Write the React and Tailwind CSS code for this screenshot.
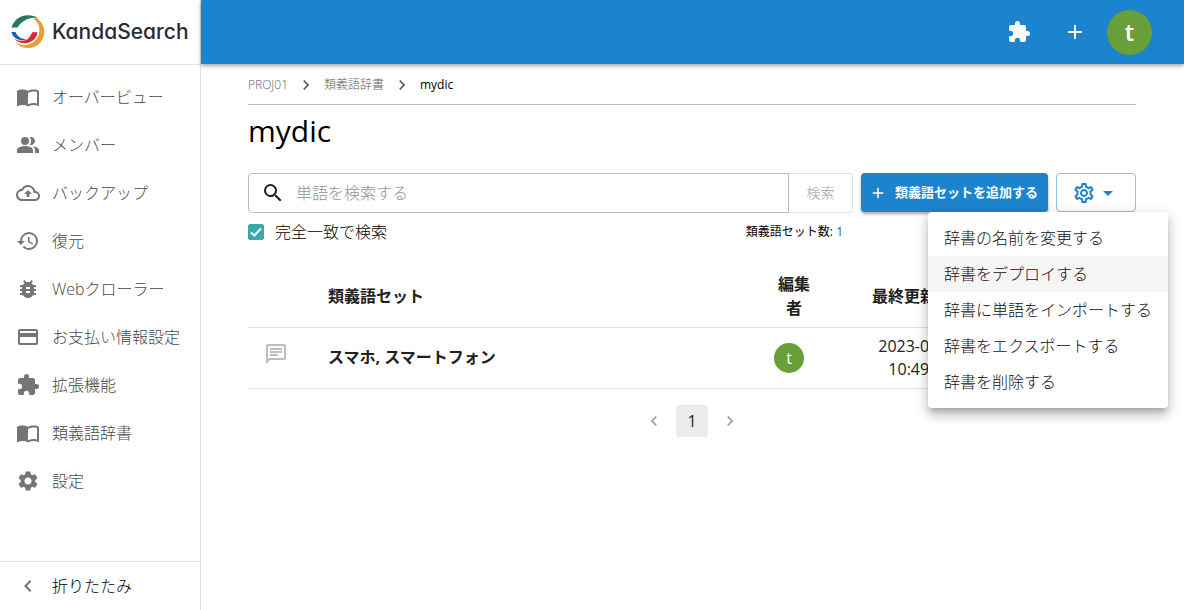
import React, { useState } from 'react';
import clsx from 'clsx';
import {
  MdAdd,
  MdArrowDropDown,
  MdBugReport,
  MdChevronLeft,
  MdChevronRight,
  MdExtension,
  MdHistory,
  MdImportContacts,
  MdOutlineBackup,
  MdOutlineChat,
  MdOutlineSettings,
  MdPayment,
  MdPeopleAlt,
  MdSearch,
  MdSettings
} from 'react-icons/md';

const menuItems = [
  { name: 'オーバービュー', path: '#overview', icon: MdImportContacts },
  { name: 'メンバー', path: '#members', icon: MdPeopleAlt },
  { name: 'バックアップ', path: '#backup', icon: MdOutlineBackup },
  { name: '復元', path: '#restore', icon: MdHistory },
  { name: 'Webクローラー', path: '#crawler', icon: MdBugReport },
  { name: 'お支払い情報設定', path: '#payment', icon: MdPayment },
  { name: '拡張機能', path: '#extensions', icon: MdExtension },
  { name: '類義語辞書', path: '#dictionaries', icon: MdImportContacts },
  { name: '設定', path: '#settings', icon: MdSettings }
];

const dictionaryActions = [
  '辞書の名前を変更する',
  '辞書をデプロイする',
  '辞書に単語をインポートする',
  '辞書をエクスポートする',
  '辞書を削除する'
];

const synonymSets = [
  { id: 1, words: 'スマホ, スマートフォン', editor: 't', date: '2023-02-01', time: '10:49:30' }
];

const Logo = () => (
  <a href="#home" className="flex h-16 items-center gap-[7px] pl-[11px]">
    <svg width="34" height="34" viewBox="0 0 34 34" aria-hidden="true">
      <path d="M0.5 12.5C3 5 9 0.3 17 0.3c4 0 7.5 1.2 10 3.2C24.500 2.600 22 2.600 19.500 3.200 13 4.500 9 8.500 6.500 12.500Z" fill="#2a7458" />
      <path d="M26.500 3.500C31 7 33.400 12 33.200 17.500 32.800 26.500 26 33 17 33c-5 0-9.500-2-12.500-6C8 29.600 12 30.600 16 29.800 23 28.500 28 23 28.400 16 28.600 11 27 7 22.500 4.200 24 3.400 25.300 3.200 26.500 3.500Z" fill="#e79f33" />
      <path d="M0.500 17H4.500C6 21.500 10.500 24.500 15.500 24c-2.500 1.600-8 1.800-11.500-1.300C2 21 0.700 19 0.500 17Z" fill="#0f60ae" />
      <path d="M26.500 17.300C26 23.500 20.500 28.200 14 28.200 9.500 28.200 5.500 26.500 3 23.500c4 2.800 9 3 12.500 1.200 2.500-1.300 4.500-4 5.500-7.400Z" fill="#d5282f" />
    </svg>
    <span className="font-['Inter',sans-serif] text-[21px] leading-8 font-medium text-[#2b2b37] [font-feature-settings:'cv11']">
      KandaSearch
    </span>
  </a>
);

const Sidebar = () => (
  <aside className="flex w-[201px] shrink-0 flex-col border-r border-[#e0e0e0] bg-white">
    <Logo />
    <nav className="flex-1 border-t border-[#e0e0e0] pt-2">
      {menuItems.map((item) => {
        const Icon = item.icon;
        return (
          <a
            key={item.path}
            href={item.path}
            className="flex h-12 items-center gap-3 pl-4 text-base text-[#484848]"
          >
            <Icon size={24} className="text-[#757575]" />
            {item.name}
          </a>
        );
      })}
    </nav>
    <button
      type="button"
      className="flex h-[49px] items-center gap-3 border-t border-[#e0e0e0] pl-4 text-base text-black"
    >
      <MdChevronLeft size={24} className="text-[#757575]" />
      折りたたみ
    </button>
  </aside>
);

const Header = () => (
  <header className="z-10 flex h-16 shrink-0 items-center justify-end bg-[#1c84ce] pr-8 text-white shadow-[0_2px_4px_rgba(0,0,0,0.35)]">
    <button type="button" aria-label="拡張機能" className="mr-8">
      <MdExtension size={24} />
    </button>
    <button type="button" aria-label="追加" className="mr-5">
      <MdAdd size={24} />
    </button>
    <button
      type="button"
      className="size-[45px] rounded-full bg-[#689f38] text-2xl font-semibold"
    >
      t
    </button>
  </header>
);

const Breadcrumb = () => (
  <nav className="flex h-[41px] items-center gap-2 border-b border-[#bdbdbd] pt-[2px] text-xs text-[#616161]">
    <a href="#proj">PROJ01</a>
    <MdChevronRight size={20} />
    <a href="#dictionaries">類義語辞書</a>
    <MdChevronRight size={20} />
    <span className="font-normal text-black">mydic</span>
  </nav>
);

const ActionMenu = () => {
  const [open, setOpen] = useState(true);
  const [active, setActive] = useState(1);

  return (
    <div className="relative ml-2">
      <button
        type="button"
        aria-label="辞書の操作"
        onClick={() => setOpen(!open)}
        className="flex h-[39px] w-20 items-center justify-center rounded border border-[#8dc1e6] text-[#1c84ce]"
      >
        <MdOutlineSettings size={24} />
        <MdArrowDropDown size={24} />
      </button>
      {open && (
        <ul className="absolute top-full -right-8 z-20 w-60 rounded bg-white py-2 shadow-[0_5px_5px_-3px_rgba(0,0,0,0.2),0_8px_10px_1px_rgba(0,0,0,0.14),0_3px_14px_2px_rgba(0,0,0,0.12)]">
          {dictionaryActions.map((label, i) => (
            <li key={label}>
              <button
                type="button"
                onMouseEnter={() => setActive(i)}
                className={clsx(
                  'h-9 w-full px-4 text-left text-base text-[#111111]',
                  active === i && 'bg-[#f5f5f5]'
                )}
              >
                {label}
              </button>
            </li>
          ))}
        </ul>
      )}
    </div>
  );
};

const Toolbar = () => (
  <div className="mt-[22px] flex items-start">
    <div className="flex h-10 flex-1 items-center rounded-l border border-[#bdbdbd] pl-3">
      <MdSearch size={24} className="text-[#212121]" />
      <input
        type="text"
        aria-label="単語を検索する"
        placeholder="単語を検索する"
        className="ml-[11px] min-w-0 flex-1 text-base outline-none placeholder:text-[#949494]"
      />
    </div>
    <button
      type="button"
      disabled
      className="h-10 w-16 rounded-r border border-l-0 border-[#e0e0e0] text-sm text-[#9e9e9e]"
    >
      検索
    </button>
    <button
      type="button"
      className="ml-2 flex h-[39px] items-center gap-2 rounded bg-[#1c84ce] pr-[10px] pl-2 text-[13px] font-bold text-white shadow-[0_2px_3px_rgba(0,0,0,0.35)]"
    >
      <MdAdd size={18} />
      類義語セットを追加する
    </button>
    <ActionMenu />
  </div>
);

const SynonymTable = () => (
  <table className="mt-[21px] w-full table-fixed text-base text-[#212121]">
    <colgroup>
      <col className="w-16" />
      <col />
      <col className="w-[72px]" />
      <col className="w-[180px]" />
      <col className="w-[126px]" />
    </colgroup>
    <thead>
      <tr className="h-[62px] border-b border-[#e0e0e0] font-bold">
        <td />
        <th className="px-4 text-left">類義語セット</th>
        <th className="px-4 text-center">編集者</th>
        <th className="px-4 text-center">最終更新日時</th>
        <td />
      </tr>
    </thead>
    <tbody>
      {synonymSets.map((set) => (
        <tr key={set.id} className="h-[61px] border-b border-[#e0e0e0]">
          <td className="pb-2 pl-4">
            <MdOutlineChat size={24} className="text-[#bdbdbd]" />
          </td>
          <td className="px-4 pb-[2px] font-bold">{set.words}</td>
          <td className="pl-4">
            <div className="flex size-[30px] items-center justify-center rounded-full bg-[#689f38] font-normal text-white">
              {set.editor}
            </div>
          </td>
          <td className="text-center leading-[23px] font-normal">
            <div>{set.date}</div>
            <div>{set.time}</div>
          </td>
          <td />
        </tr>
      ))}
    </tbody>
  </table>
);

const Pagination = () => (
  <div className="mt-4 flex items-center justify-center gap-3 text-[#9e9e9e]">
    <button type="button" aria-label="前へ">
      <MdChevronLeft size={20} />
    </button>
    <button type="button" className="size-8 rounded bg-[#ebebeb] text-base font-normal text-[#212121]">
      1
    </button>
    <button type="button" aria-label="次へ">
      <MdChevronRight size={20} />
    </button>
  </div>
);

const App = () => {
  const [exact, setExact] = useState(true);

  return (
    <div className="flex min-h-screen bg-white font-['Open_Sans','Noto_Sans_CJK_JP',sans-serif] font-light">
      <Sidebar />
      <div className="flex min-w-0 flex-1 flex-col">
        <Header />
        <main className="flex-1 pr-12 pl-[47px]">
          <Breadcrumb />
          <h1 className="mt-[6px] text-[30px] leading-10 font-normal text-black">mydic</h1>
          <Toolbar />
          <div className="mt-[7px] flex h-6 items-center">
            <label className="flex items-center gap-[11px] text-base text-black">
              <span className="relative flex size-4">
                <input
                  type="checkbox"
                  checked={exact}
                  onChange={(e) => setExact(e.target.checked)}
                  className="peer size-4 appearance-none rounded-xs border border-[#3aa9ab] checked:bg-[#3aa9ab]"
                />
                <svg
                  viewBox="0 0 16 16"
                  className="pointer-events-none absolute inset-0 hidden fill-none stroke-white stroke-2 peer-checked:block"
                >
                  <path d="M3 8.500 6.300 11.500 13 4.500" />
                </svg>
              </span>
              完全一致で検索
            </label>
            <p className="mr-[293px] ml-auto text-xs font-normal text-black">
              類義語セット数: <span className="text-[#14608f]">1</span>
            </p>
          </div>
          <SynonymTable />
          <Pagination />
        </main>
      </div>
    </div>
  );
};

export default App;
